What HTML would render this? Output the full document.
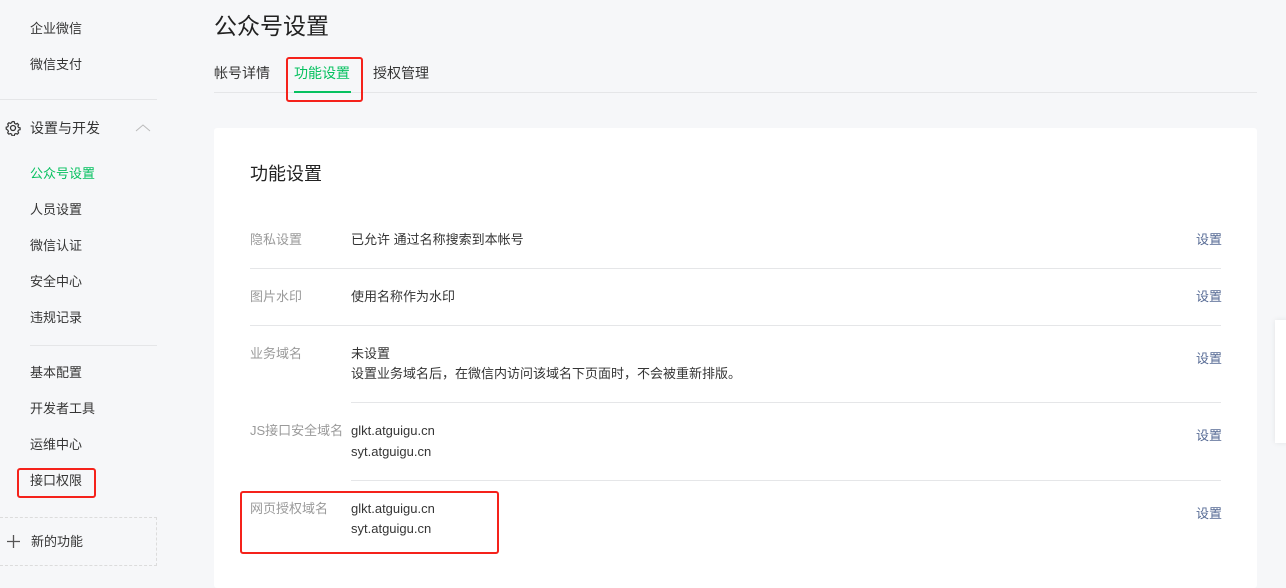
<!DOCTYPE html>
<html><head><meta charset="utf-8"><style>
*{margin:0;padding:0;box-sizing:border-box}
body{width:1286px;height:579px;overflow:hidden;background:#f6f7f9;font-family:"Liberation Sans","Noto Sans CJK SC",sans-serif;font-size:13px;color:#353535;position:relative;line-height:18px}
.a{position:absolute;white-space:nowrap}
.nav{left:30px;color:#353535;font-size:13px}
.line{position:absolute;height:1px;background:#e5e6e8}
.lab{left:250px;color:#9a9a9a}
.set{left:1196px;color:#576b95}
.red{position:absolute;border:2px solid #f5221b;border-radius:3px;z-index:5}
</style></head><body>
<div class="a nav" style="top:20px">企业微信</div>
<div class="a nav" style="top:56px">微信支付</div>
<div class="line" style="left:0;top:99px;width:157px"></div>
<svg class="a" style="left:5px;top:120px" width="16" height="16" viewBox="0 0 16 16"><circle cx="8" cy="8" r="2.5" fill="none" stroke="#353535" stroke-width="1.3"/><path d="M8 1.5l1.3.3.3 1.6 1.3.7 1.5-.7 1.2 1.3-.7 1.5.6 1.3 1.6.4v1.8l-1.6.4-.6 1.3.7 1.5-1.2 1.3-1.5-.7-1.3.7-.3 1.6H7l-.3-1.6-1.3-.7-1.5.7-1.2-1.3.7-1.5-.6-1.3L1.2 9V7.2l1.6-.4.6-1.3-.7-1.5 1.2-1.3 1.5.7 1.3-.7L7 1.8z" fill="none" stroke="#353535" stroke-width="1.2"/></svg>
<div class="a" style="left:30px;top:119px;font-size:14px">设置与开发</div>
<svg class="a" style="left:135px;top:123px" width="16" height="10"><path d="M1 8l7-6 7 6" fill="none" stroke="#bbb" stroke-width="1"/></svg>
<div class="a nav" style="top:165px;color:#07c160">公众号设置</div>
<div class="a nav" style="top:201px">人员设置</div>
<div class="a nav" style="top:237px">微信认证</div>
<div class="a nav" style="top:273px">安全中心</div>
<div class="a nav" style="top:309px">违规记录</div>
<div class="line" style="left:30px;top:345px;width:127px"></div>
<div class="a nav" style="top:364px">基本配置</div>
<div class="a nav" style="top:400px">开发者工具</div>
<div class="a nav" style="top:436px">运维中心</div>
<div class="a nav" style="top:472px">接口权限</div>
<div class="red" style="left:17px;top:468px;width:79px;height:30px"></div>
<div class="a" style="left:0;top:517px;width:157px;height:49px;border:1px dashed #dcdcdc;border-left:none"></div>
<svg class="a" style="left:7px;top:535px" width="13" height="13"><path d="M6.5 0v13M0 6.5h13" stroke="#555" stroke-width="1.3"/></svg>
<div class="a" style="left:31px;top:533px">新的功能</div>

<div class="a" style="left:214px;top:11px;font-size:23px;line-height:30px;color:#222">公众号设置</div>
<div class="a" style="left:214px;top:64px;font-size:14px;color:#353535">帐号详情</div>
<div class="a" style="left:294px;top:64px;font-size:14px;color:#07c160">功能设置</div>
<div class="line" style="left:214px;top:92px;width:1043px"></div>
<div class="a" style="left:294px;top:91px;width:57px;height:2px;background:#07c160;z-index:2"></div>
<div class="a" style="left:373px;top:64px;font-size:14px">授权管理</div>
<div class="red" style="left:286px;top:57px;width:77px;height:45px"></div>

<div class="a" style="left:214px;top:128px;width:1043px;height:460px;background:#fff;border-radius:3px"></div>
<div class="a" style="left:250px;top:163px;font-size:18px;line-height:22px;color:#222">功能设置</div>

<div class="a lab" style="top:231px">隐私设置</div>
<div class="a" style="left:351px;top:231px">已允许 通过名称搜索到本帐号</div>
<div class="a set" style="top:231px">设置</div>
<div class="line" style="left:250px;top:268px;width:971px"></div>
<div class="a lab" style="top:288px">图片水印</div>
<div class="a" style="left:351px;top:288px">使用名称作为水印</div>
<div class="a set" style="top:288px">设置</div>
<div class="line" style="left:250px;top:325px;width:971px"></div>
<div class="a lab" style="top:345px">业务域名</div>
<div class="a" style="left:351px;top:345px">未设置</div>
<div class="a" style="left:351px;top:365px">设置业务域名后，在微信内访问该域名下页面时，不会被重新排版。</div>
<div class="a set" style="top:350px">设置</div>
<div class="line" style="left:351px;top:402px;width:870px"></div>
<div class="a lab" style="top:422px">JS接口安全域名</div>
<div class="a" style="left:351px;top:422px">glkt.atguigu.cn</div>
<div class="a" style="left:351px;top:443px">syt.atguigu.cn</div>
<div class="a set" style="top:427px">设置</div>
<div class="line" style="left:351px;top:480px;width:870px"></div>
<div class="a lab" style="top:500px">网页授权域名</div>
<div class="a" style="left:351px;top:500px">glkt.atguigu.cn</div>
<div class="a" style="left:351px;top:520px">syt.atguigu.cn</div>
<div class="a set" style="top:505px">设置</div>
<div class="red" style="left:240px;top:491px;width:259px;height:63px"></div>

<div class="a" style="left:1275px;top:320px;width:14px;height:123px;background:#fff;box-shadow:0 0 6px rgba(0,0,0,.08)"></div>
</body></html>
